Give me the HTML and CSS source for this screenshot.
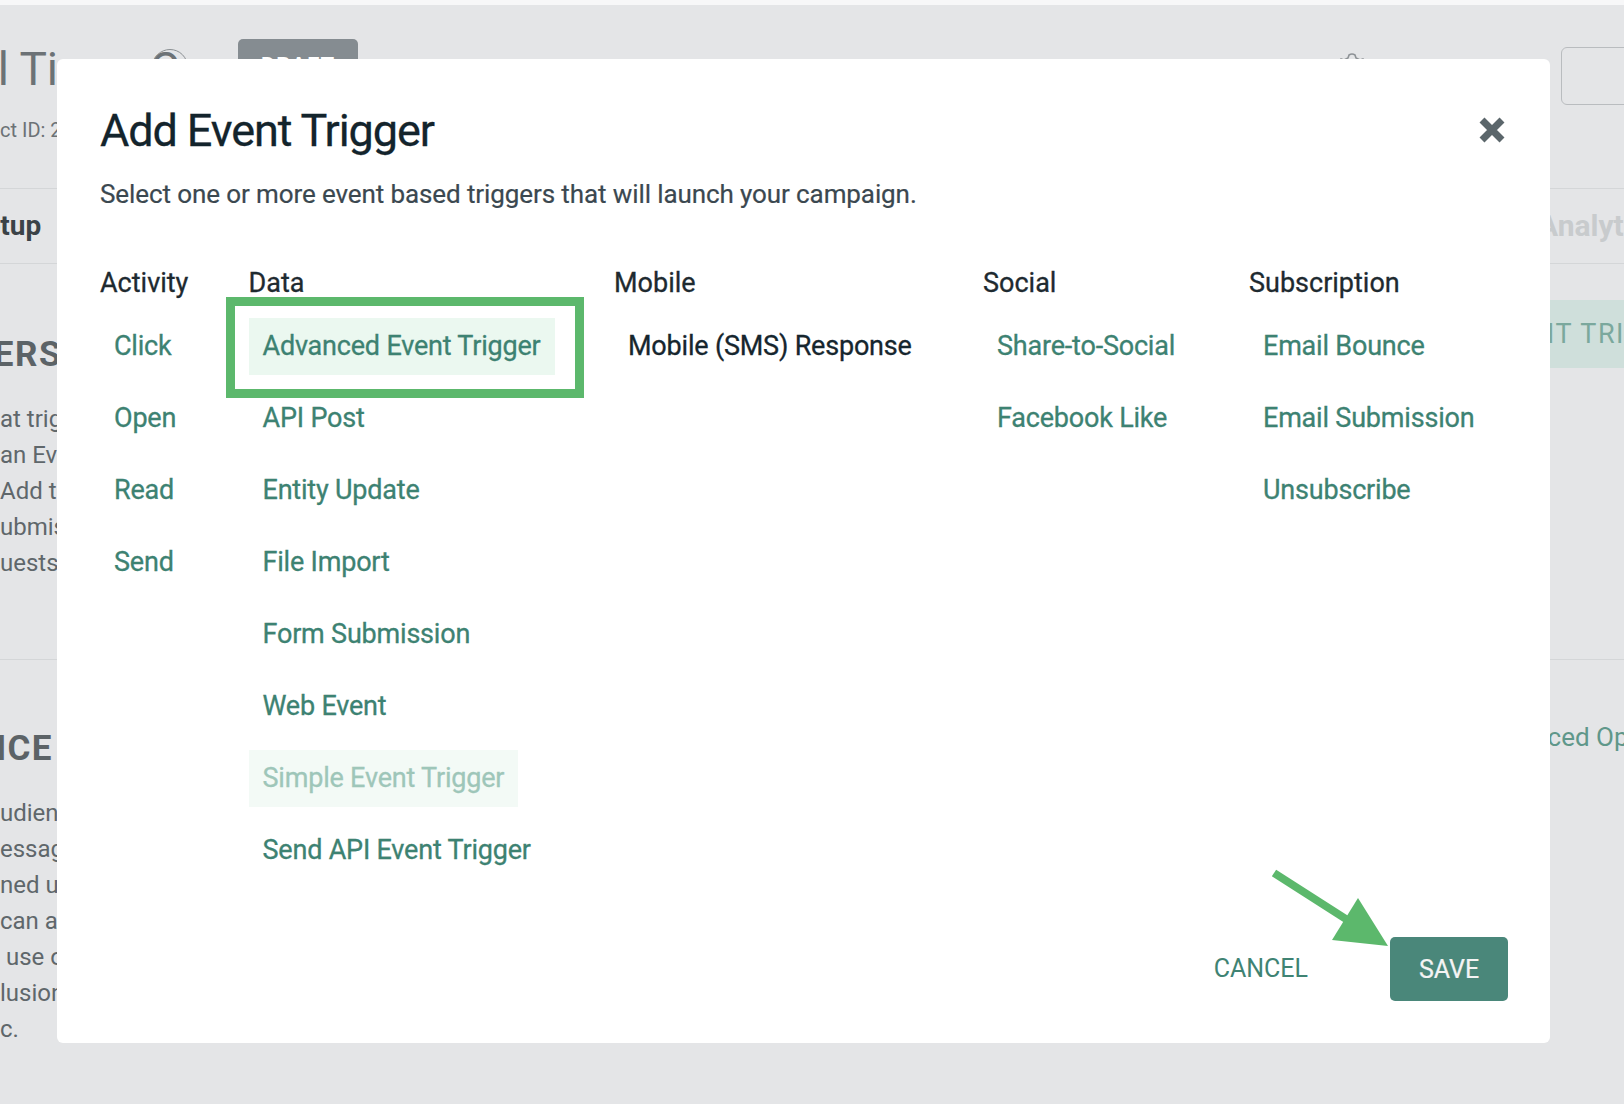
FILE: index.html
```html
<!DOCTYPE html>
<html lang="en">
<head>
<meta charset="utf-8">
<title>Add Event Trigger</title>
<link rel="stylesheet" href="styles.css">
</head>
<body>
<div class="page">
  <div class="topstrip"></div>
  <header class="page-head">
    <div class="head-left">
      <div class="title-row">
        <h1 class="page-title">Email Timer Campaign</h1>
        <span class="circle-icon"></span>
        <span class="badge">DRAFT</span>
      </div>
      <div class="project-id">Project ID: 28174</div>
    </div>
    <div class="head-right">
      <svg class="gear" width="30" height="30" viewBox="0 0 30 30"><path d="M12 3 Q15 1 18 3 L19 6 Q21 7 23 8 L26 7 Q28 10 27 13 L25 15 L27 17 Q28 20 26 23 L23 22 Q21 23 19 24 L18 27 Q15 29 12 27 L11 24 Q9 23 7 22 L4 23 Q2 20 3 17 L5 15 L3 13 Q2 10 4 7 L7 8 Q9 7 11 6 Z" fill="none" stroke="#8d9296" stroke-width="1.6"/></svg>
      <div class="outline-box"></div>
    </div>
  </header>
  <nav class="tabs">
    <span class="tab tab-active">Setup</span>
    <span class="tab tab-muted">Analytics</span>
  </nav>
  <section class="sec sec-one">
    <div class="sec-left">
      <h2 class="sec-title">EVENT TRIGGERS</h2>
      <p class="sec-text">
        <span>at triggers the campaign</span>
        <span>an Event happens for a contact</span>
        <span>Add triggers such as form</span>
        <span>ubmissions, clicks and API</span>
        <span>uests to start the campaign</span>
      </p>
    </div>
    <div class="sec-right sec-right-one">
      <span class="ghost-btn">EDIT TRIGGERS</span>
    </div>
  </section>
  <section class="sec sec-two">
    <div class="sec-left">
      <h2 class="sec-title sec-title-two">AUDIENCE</h2>
      <p class="sec-text">
        <span>udience receives the</span>
        <span>essages defined in the</span>
        <span>ned using segments</span>
        <span>can also choose to</span>
        <span>&nbsp;use of inclusion and</span>
        <span>lusion lists, filters</span>
        <span>c.</span>
      </p>
    </div>
    <div class="sec-right sec-right-two">
      <span class="adv-link">Advanced Options</span>
    </div>
  </section>
</div>

<div class="modal" role="dialog" aria-labelledby="modal-title">
  <div class="modal-head">
    <h1 class="modal-title" id="modal-title">Add Event Trigger</h1>
    <button class="close-btn" aria-label="Close">
      <svg width="28" height="28" viewBox="0 0 28 28"><path d="M4 4 L24 24 M24 4 L4 24" stroke="#5b666b" stroke-width="7" stroke-linecap="butt" fill="none"/></svg>
    </button>
  </div>
  <p class="modal-sub">Select one or more event based triggers that will launch your campaign.</p>

  <div class="columns">
    <div class="col">
      <div class="col-head">Activity</div>
      <div class="col-list">
        <span class="item">Click</span>
        <span class="item">Open</span>
        <span class="item">Read</span>
        <span class="item">Send</span>
      </div>
    </div>
    <div class="col">
      <div class="col-head">Data</div>
      <div class="col-list">
        <span class="item item-selected">Advanced Event Trigger</span>
        <span class="item">API Post</span>
        <span class="item">Entity Update</span>
        <span class="item">File Import</span>
        <span class="item">Form Submission</span>
        <span class="item">Web Event</span>
        <span class="item item-disabled">Simple Event Trigger</span>
        <span class="item">Send API Event Trigger</span>
      </div>
    </div>
    <div class="col">
      <div class="col-head">Mobile</div>
      <div class="col-list">
        <span class="item item-plain">Mobile (SMS) Response</span>
      </div>
    </div>
    <div class="col">
      <div class="col-head">Social</div>
      <div class="col-list">
        <span class="item">Share-to-Social</span>
        <span class="item">Facebook Like</span>
      </div>
    </div>
    <div class="col">
      <div class="col-head">Subscription</div>
      <div class="col-list">
        <span class="item">Email Bounce</span>
        <span class="item">Email Submission</span>
        <span class="item">Unsubscribe</span>
      </div>
    </div>
  </div>

  <div class="modal-foot">
    <button class="btn-cancel">CANCEL</button>
    <button class="btn-save">SAVE</button>
  </div>

  <div class="annot-box"></div>
  <svg class="annot-arrow" width="140" height="100" viewBox="0 0 140 100">
    <line x1="17" y1="14" x2="92" y2="62" stroke="#5cb86c" stroke-width="8"/>
    <polygon points="101,39 75,81 131,87" fill="#5cb86c"/>
  </svg>
</div>
</body>
</html>
```

FILE: styles.css
```css
* { box-sizing: border-box; }

html, body {
  margin: 0;
  padding: 0;
}

body {
  width: 1624px;
  height: 1104px;
  overflow: hidden;
  position: relative;
  background: #e4e5e7;
  font-family: "Roboto", "Liberation Sans", sans-serif;
}

/* ---------- background page ---------- */
.page {
  width: 1624px;
  height: 1104px;
  color: #62696d;
}

.topstrip {
  height: 5px;
  background: #f7f7f8;
}

.page-head {
  display: flex;
  height: 184px;
  border-bottom: 1.5px solid #d4d6d8;
}

.head-left {
  display: flex;
  flex-direction: column;
}

.title-row {
  display: flex;
  align-items: flex-start;
}

.page-title {
  flex: none;
  width: 257px;
  margin: 37px 0 0 -105px;
  font-size: 46px;
  line-height: 54px;
  font-weight: 400;
  color: #6c7276;
  white-space: nowrap;
}

.circle-icon {
  flex: none;
  width: 36px;
  height: 36px;
  margin-top: 44px;
  border: 1.5px solid #8a8f93;
  border-radius: 50%;
}

.badge {
  flex: none;
  width: 120px;
  height: 50px;
  margin: 34px 0 0 50px;
  border-radius: 5px;
  background: #858c91;
  color: #fff;
  font-size: 22px;
  font-weight: 700;
  line-height: 53px;
  letter-spacing: 1px;
  text-align: center;
  overflow: hidden;
}

.project-id {
  margin: 22px 0 0 -46px;
  font-size: 20px;
  line-height: 24px;
  color: #6c7276;
  white-space: nowrap;
}

.head-right {
  display: flex;
  align-items: flex-start;
  margin-left: auto;
  margin-right: -27px;
}

.gear {
  margin-top: 47px;
}

.outline-box {
  width: 90px;
  height: 58px;
  margin: 42px 0 0 194px;
  border: 1.5px solid #b9bcbf;
  border-radius: 6px;
}

.tabs {
  display: flex;
  height: 74.5px;
  padding-top: 21px;
  border-bottom: 1.5px solid #d4d6d8;
}

.tab {
  font-size: 28px;
  line-height: 32px;
  font-weight: 700;
  white-space: nowrap;
}

.tab-active {
  margin-left: -32px;
  color: #3b4247;
}

.tab-muted {
  margin-left: auto;
  width: 86px;
  font-size: 30px;
  color: #c8cbcd;
}

.sec {
  display: flex;
}

.sec-one {
  height: 396px;
  padding-top: 68px;
  border-bottom: 1.5px solid #d4d6d8;
}

.sec-two {
  padding-top: 66px;
}

.sec-left {
  flex: none;
  width: 60px;
}

.sec-title {
  width: 422px;
  margin: 0 0 0 -360px;
  font-size: 35px;
  line-height: 46px;
  font-weight: 700;
  letter-spacing: 1.5px;
  text-align: right;
  color: #5c6367;
  white-space: nowrap;
}

.sec-title-two {
  width: 413px;
}

.sec-text {
  margin: 23px 0 0;
  font-size: 24px;
  line-height: 36px;
  color: #5f676b;
  white-space: nowrap;
}

.sec-text span {
  display: block;
}

.sec-right {
  flex: none;
  margin-left: auto;
}

.sec-right-one {
  width: 142px;
  margin-top: -32px;
}

.ghost-btn {
  display: block;
  width: 240px;
  height: 68px;
  padding-left: 29px;
  background: #cfdfdb;
  color: #7ba89d;
  font-size: 27px;
  line-height: 68px;
  letter-spacing: 1.5px;
  white-space: nowrap;
}

.sec-right-two {
  width: 149px;
  margin-top: -4px;
}

.adv-link {
  display: block;
  font-size: 26px;
  line-height: 30px;
  color: #5f978a;
  white-space: nowrap;
}

/* ---------- modal ---------- */
.modal {
  position: absolute;
  left: 57px;
  top: 59px;
  width: 1493px;
  height: 984px;
  display: flex;
  flex-direction: column;
  padding: 44px 42px 42px 43px;
  background: #fff;
  border-radius: 6px;
}

.modal-head {
  display: flex;
  align-items: center;
  justify-content: space-between;
}

.modal-title {
  margin: 0;
  font-size: 45px;
  line-height: 56px;
  font-weight: 400;
  letter-spacing: -1.1px;
  color: #13242c;
  -webkit-text-stroke: 0.3px #13242c;
}

.close-btn {
  width: 28px;
  height: 28px;
  padding: 0;
  margin: -2px 2px 0 0;
  border: 0;
  background: none;
  display: flex;
}

.modal-sub {
  margin: 19px 0 0;
  font-size: 26px;
  line-height: 32px;
  letter-spacing: -0.1px;
  color: #3b4850;
  -webkit-text-stroke: 0.2px #3b4850;
}

.columns {
  display: grid;
  grid-template-columns: 148.5px 365.5px 369px 266px 1fr;
  margin-top: 57px;
}

.col-head {
  font-size: 27px;
  line-height: 32px;
  color: #1e2a30;
  white-space: nowrap;
  -webkit-text-stroke: 0.3px #1e2a30;
}

.col-list {
  display: flex;
  flex-direction: column;
  align-items: flex-start;
  gap: 15px;
  margin-top: 19px;
}

.item {
  height: 57px;
  padding: 0 14px;
  font-size: 27px;
  line-height: 57px;
  letter-spacing: -0.2px;
  color: #3d8272;
  white-space: nowrap;
  -webkit-text-stroke: 0.3px currentColor;
}

.item-selected {
  background: #ebf8f0;
}

.item-disabled {
  background: #f3faf6;
  color: #9ec6b9;
}

.item-plain {
  color: #16262e;
}

.modal-foot {
  display: flex;
  justify-content: flex-end;
  align-items: center;
  margin-top: auto;
}

.btn-cancel {
  margin-right: 82px;
  padding: 0;
  border: 0;
  background: none;
  font-family: inherit;
  font-size: 25px;
  line-height: 30px;
  color: #3f8373;
}

.btn-save {
  width: 118px;
  height: 64px;
  padding: 0;
  border: 0;
  border-radius: 5px;
  background: #4a877a;
  color: #f4f4f4;
  font-family: inherit;
  font-size: 25px;
  -webkit-text-stroke: 0.2px #f4f4f4;
}

.annot-box {
  position: absolute;
  left: 169px;
  top: 238px;
  width: 358px;
  height: 101px;
  border: 9px solid #5cb86c;
}

.annot-arrow {
  position: absolute;
  left: 1200px;
  top: 800px;
}
```
